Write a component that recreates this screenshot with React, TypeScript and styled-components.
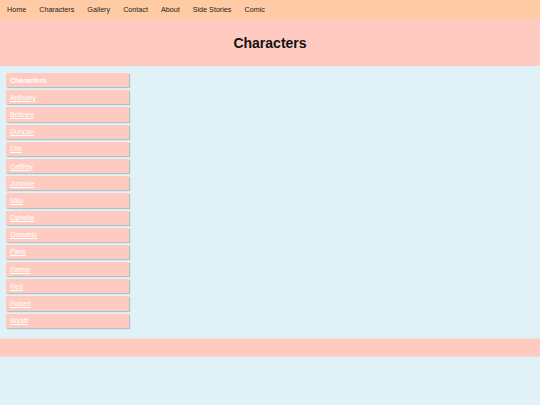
import React from "react";
import styled, { createGlobalStyle } from "styled-components";

const GlobalStyle = createGlobalStyle`
  html, body {
    margin: 0;
    padding: 0;
    background: #e0f2f7;
    font-family: "Liberation Sans", Arial, sans-serif;
  }
`;

const Nav = styled.nav`
  display: flex;
  align-items: center;
  gap: 13px;
  height: 19px;
  padding: 0 7px;
  background: #ffcba4;
`;

const NavLink = styled.a`
  font-size: 7.2px;
  color: #222;
  text-decoration: none;
`;

const Header = styled.header`
  height: 47px;
  display: flex;
  align-items: center;
  justify-content: center;
  background: #ffcbc0;
`;

const Title = styled.h1`
  margin: 0;
  padding-top: 1px;
  font-size: 14px;
  font-weight: bold;
  color: #111;
`;

const Main = styled.main`
  padding: 7px 0 10px 6px;
`;

const Sidebar = styled.ul`
  list-style: none;
  margin: 0;
  padding: 0;
  width: 123px;
  display: flex;
  flex-direction: column;
  gap: 3px;
`;

interface ItemProps {
  heading?: boolean;
}

const Item = styled.li<ItemProps>`
  height: 14.2px;
  display: flex;
  align-items: center;
  padding-left: 4px;
  background: #ffcbc0;
  box-shadow: 1px 1px 1px rgba(0, 0, 0, 0.2);
  font-size: 7px;
  font-weight: ${(props) => (props.heading ? "bold" : "normal")};
  color: #fff;

  a {
    color: #fff;
    text-decoration: underline;
  }
`;

const Footer = styled.footer`
  height: 17px;
  background: #ffcbc0;
  border-top: 1px solid #f0ddd8;
  border-bottom: 1px solid #f0ddd8;
`;

const links = ["Home", "Characters", "Gallery", "Contact", "About", "Side Stories", "Comic"];

const characters = [
  "Anthony",
  "Brittney",
  "Duncan",
  "Elle",
  "Geffrey",
  "Johnnie",
  "Milo",
  "Ophelia",
  "Oswaldo",
  "Paris",
  "Rainer",
  "Red",
  "Robert",
  "Wyatt",
];

const App = () => {
  return (
    <>
      <GlobalStyle />
      <Nav>
        {links.map((l) => (
          <NavLink key={l} href="#">
            {l}
          </NavLink>
        ))}
      </Nav>
      <Header>
        <Title>Characters</Title>
      </Header>
      <Main>
        <Sidebar>
          <Item heading>Characters</Item>
          {characters.map((c) => (
            <Item key={c}>
              <a href="#">{c}</a>
            </Item>
          ))}
        </Sidebar>
      </Main>
      <Footer />
    </>
  );
};

export default App;
